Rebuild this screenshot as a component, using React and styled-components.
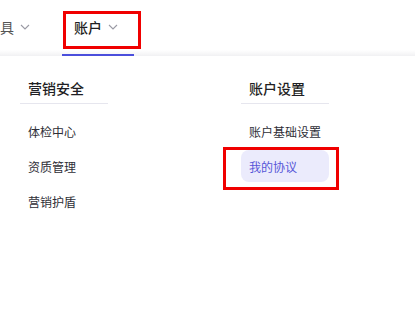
import React from 'react';
import styled, { createGlobalStyle } from 'styled-components';

const GlobalStyle = createGlobalStyle`
  html, body {
    margin: 0;
    padding: 0;
    background: #fff;
    overflow: hidden;
  }
  body {
    font-family: "Noto Sans CJK SC", "Noto Sans", sans-serif;
  }
`;

const Page = styled.div`
  width: 415px;
  height: 309px;
  overflow: hidden;
  background: #fff;
`;

const TopBar = styled.div`
  height: 56px;
  display: flex;
  align-items: stretch;
  background: linear-gradient(#fff 0, #fff 50px, #f1f1f3 56px);
`;

const NavList = styled.nav`
  display: flex;
  align-items: stretch;
`;

const NavItem = styled.div`
  position: relative;
  display: flex;
  align-items: center;
  gap: 6px;
  padding: 0 ${p => (p.$active ? '16px' : '32px')} 0 ${p => (p.$active ? '12px' : '0')};
  font-size: 14px;
  line-height: 20px;
  color: ${p => (p.$active ? '#1f1f24' : '#555')};
  font-weight: ${p => (p.$active ? 500 : 400)};
  border-bottom: 2px solid ${p => (p.$active ? '#4b4fdc' : 'transparent')};
  box-sizing: border-box;
`;

const Chevron = () => (
  <svg width="10" height="6" viewBox="0 0 10 6" fill="none">
    <path d="M1 1 L5 5 L9 1" stroke="#9a9aa4" strokeWidth="1.1" />
  </svg>
);

const Marker = styled.span`
  position: absolute;
  border: 3px solid #f00000;
  box-sizing: border-box;
  pointer-events: none;
  left: ${p => p.$left}px;
  top: ${p => p.$top}px;
  width: ${p => p.$w}px;
  height: ${p => p.$h}px;
`;

const Menu = styled.div`
  display: grid;
  grid-template-columns: 88px 88px;
  column-gap: 133px;
  padding: 22px 0 0 20px;
`;

const Column = styled.div`
  display: flex;
  flex-direction: column;
`;

const GroupTitle = styled.div`
  padding: 0 8px 5px;
  font-size: 14px;
  line-height: 20px;
  font-weight: 500;
  color: #1f1f24;
  border-bottom: 1px solid #e6e6ee;
  margin-bottom: 11px;
  white-space: nowrap;
`;

const Items = styled.div`
  display: flex;
  flex-direction: column;
  gap: 3px;
`;

const Item = styled.div`
  position: relative;
  height: 32px;
  display: flex;
  align-items: center;
  padding: 0 8px;
  border-radius: 8px;
  font-size: 12px;
  white-space: nowrap;
  color: ${p => (p.$selected ? '#5656d8' : '#2e2e36')};
  background: ${p => (p.$selected ? '#ebebfc' : 'transparent')};
`;

const groups = [
  { title: '营销安全', items: ['体检中心', '资质管理', '营销护盾'] },
  { title: '账户设置', items: ['账户基础设置', '我的协议'] },
];

export default function App() {
  return (
    <Page>
      <GlobalStyle />
      <TopBar>
        <NavList>
          <NavItem>
            具
            <Chevron />
          </NavItem>
          <NavItem $active>
            账户
            <Chevron />
            <Marker $left={1} $top={11} $w={78} $h={38} />
          </NavItem>
        </NavList>
      </TopBar>
      <Menu>
        {groups.map(g => (
          <Column key={g.title}>
            <GroupTitle>{g.title}</GroupTitle>
            <Items>
              {g.items.map(it => (
                <Item key={it} $selected={it === '我的协议'}>
                  {it}
                  {it === '我的协议' && <Marker $left={-18} $top={-3} $w={116} $h={43} />}
                </Item>
              ))}
            </Items>
          </Column>
        ))}
      </Menu>
    </Page>
  );
}
